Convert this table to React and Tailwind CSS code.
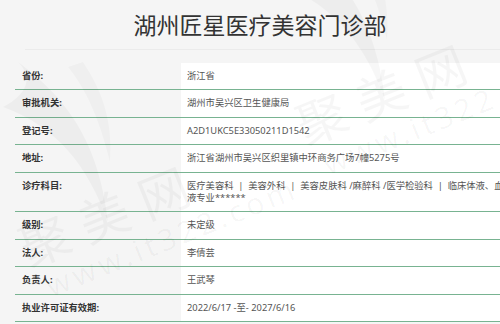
import React from "react";

const rows = [
  { label: "省份:", value: "浙江省" },
  { label: "审批机关:", value: "湖州市吴兴区卫生健康局" },
  { label: "登记号:", value: "A2D1UKC5E33050211D1542" },
  { label: "地址:", value: "浙江省湖州市吴兴区织里镇中环商务广场7幢5275号" },
  {
    label: "诊疗科目:",
    value: (
      <>
        医疗美容科&nbsp;&nbsp;|&nbsp;&nbsp;美容外科&nbsp;&nbsp;|&nbsp;&nbsp;美容皮肤科 /麻醉科 /医学检验科&nbsp;&nbsp;|&nbsp;&nbsp;临床体液、血
        <br />
        液专业******
      </>
    ),
  },
  { label: "级别:", value: "未定级" },
  { label: "法人:", value: "李倩芸" },
  { label: "负责人:", value: "王武琴" },
  { label: "执业许可证有效期:", value: "2022/6/17 -至- 2027/6/16" },
];

const Watermark = ({ className }) => (
  <div className={`absolute pointer-events-none select-none ${className}`}>
    <svg width="150" height="160" viewBox="0 0 150 160" className="absolute -left-[40px] -top-[160px]">
      <path
        d="M30 0 C70 30 110 70 120 160 C100 105 70 65 15 45 C40 32 45 15 30 0 Z"
        fill="rgba(0,0,0,0.03)"
      />
      <path d="M95 0 C115 30 125 60 122 100 C112 60 100 30 80 5 Z" fill="rgba(0,0,0,0.025)" />
    </svg>
    <div className="-rotate-[22deg] origin-left">
      <div className="text-[50px] leading-[54px] tracking-[14px] text-black/[0.035]">聚美网</div>
      <div className="text-[30px] leading-[34px] tracking-[4px] text-black/[0.035] ml-[10px]">www.it322.com</div>
    </div>
  </div>
);

export default function App() {
  return (
    <div
      className="relative w-[500px] h-[324px] overflow-hidden bg-[#f5f5f5] text-[#333]"
      style={{ fontFamily: '"Noto Sans", "Noto Sans CJK SC", sans-serif' }}
    >
      <div className="h-[49px] flex items-center justify-center pl-[20px]">
        <h1 className="text-[23px] leading-none text-[#333] pt-[1px]">湖州匠星医疗美容门诊部</h1>
      </div>
      <div className="ml-[25px] border-t border-[#ebebeb]" />
      <div className="mt-[13px] ml-[15px] w-[510px]">
        {rows.map((r, i) => (
          <div key={i} className="flex border-b border-[#78b391]">
            <div className="w-[166px] shrink-0 px-[7px] py-[7px] leading-[12.4px] font-bold text-[#333] text-[9.3px]">
              {r.label}
            </div>
            <div className="flex-1 bg-white px-[6px] py-[7px] leading-[12.4px] text-[#555] text-[9.3px] whitespace-nowrap">
              {r.value}
            </div>
          </div>
        ))}
      </div>
      <Watermark className="left-[305px] top-[100px]" />
      <Watermark className="left-[28px] top-[222px]" />
    </div>
  );
}
